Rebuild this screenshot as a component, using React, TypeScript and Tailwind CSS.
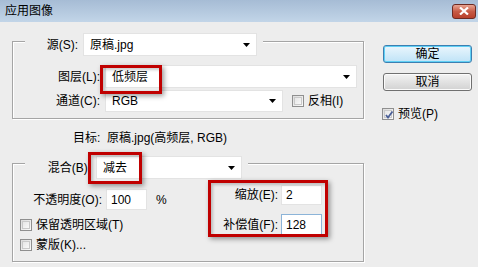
import React from "react";

const font = { fontFamily: '"Liberation Sans", "Noto Sans CJK SC", sans-serif' };

function Arrow() {
  return (
    <svg width="7" height="4" viewBox="0 0 7 4" className="shrink-0">
      <path d="M0 0H7L3.5 4Z" fill="#000" />
    </svg>
  );
}

function Select({ value, className }: { value: string; className: string }) {
  return (
    <div className={`flex items-center justify-between bg-white border border-[#e3e3e3] pl-[6px] pr-[6px] ${className}`}>
      <span>{value}</span>
      <Arrow />
    </div>
  );
}

function Check({ checked }: { checked?: boolean }) {
  return (
    <div className="w-[12px] h-[12px] shrink-0 border border-[#8f8f8f] bg-gradient-to-br from-[#dcdcdc] to-[#fbfbfb] p-[1px]">
      <div className="w-full h-full border border-[#c9c9c9] bg-gradient-to-br from-[#e6e6e6] to-[#f8f8f8] relative">
        {checked && (
          <svg width="10" height="10" viewBox="0 0 10 10" className="absolute -left-[1px] -top-[1px]">
            <path d="M2 5L4 7.5L8.5 1.5" stroke="#4a5f97" strokeWidth="1.8" fill="none" />
          </svg>
        )}
      </div>
    </div>
  );
}

function Box({ className }: { className: string }) {
  return (
    <div
      className={`absolute border-[3px] border-[#c00000] shadow-[2px_2px_5px_rgba(0,0,0,0.4),inset_2px_2px_3px_rgba(0,0,0,0.2)] pointer-events-none ${className}`}
    />
  );
}

export default function App() {
  const group = "border border-[#a5a5a5] shadow-[inset_1px_1px_0_#fff,1px_1px_0_#fff]";
  return (
    <div className="relative w-[478px] h-[267px] overflow-hidden bg-[#ededed] text-[12px] leading-none text-black" style={font}>
      {/* title bar */}
      <div className="h-[22px] flex items-center justify-between pl-[5px] pr-[2px] bg-gradient-to-b from-[#a6bcd5] to-[#c2d5e8]">
        <span className="text-[12px]">应用图像</span>
        <div className="w-[24px] h-[15px] rounded-[3px] border border-[#6d2a22] bg-gradient-to-b from-[#e8a593] via-[#c75a45] to-[#b8402c] flex items-center justify-center">
          <svg width="10" height="8" viewBox="0 0 10 8">
            <path d="M1 0.5L9 7.5M9 0.5L1 7.5" stroke="#fff" strokeWidth="2.2" />
          </svg>
        </div>
      </div>

      <div className="flex">
        {/* left side */}
        <div className="w-[383px] pl-[12px]">
          {/* group 1 */}
          <div className={`mt-[19px] w-[352px] h-[78px] ${group}`}>
            <div className="-mt-[9px] ml-[12px] w-fit flex items-center h-[23px] bg-[#ededed] pr-[6px]">
              <span className="w-[58px] text-right pr-[5px]">源(S):</span>
              <Select value="原稿.jpg" className="w-[174px] h-[23px]" />
            </div>
            <div className="mt-[9px] flex items-center h-[23px]">
              <span className="w-[92px] text-right pr-[5px]">图层(L):</span>
              <Select value="低频层" className="w-[252px] h-[23px]" />
            </div>
            <div className="mt-[2px] flex items-center h-[22px]">
              <span className="w-[92px] text-right pr-[5px]">通道(C):</span>
              <Select value="RGB" className="w-[178px] h-[22px]" />
              <div className="ml-[9px]"><Check /></div>
              <span className="ml-[4px]">反相(I)</span>
            </div>
          </div>

          <div className="mt-[11px] h-[16px] flex items-center pl-[61px]">目标:&nbsp;&nbsp;原稿.jpg(高频层, RGB)</div>

          {/* group 2 */}
          <div className={`mt-[17px] w-[352px] h-[99px] ${group}`}>
            <div className="-mt-[8px] ml-[12px] w-fit flex items-center h-[23px] bg-[#ededed] pr-[6px]">
              <span className="w-[71px] text-right pr-[5px]">混合(B):</span>
              <Select value="减去" className="w-[146px] h-[23px]" />
            </div>
            <div className="mt-[6px] flex">
              <div className="w-[195px] pt-[4px]">
                <div className="flex items-center h-[21px]">
                  <span className="w-[93px] text-right pr-[4px]">不透明度(O):</span>
                  <div className="w-[41px] h-[21px] bg-white border border-[#e3e3e3] flex items-center pl-[4px]">100</div>
                  <span className="ml-[9px]">%</span>
                </div>
                <div className="mt-[8px] h-[14px] flex items-center pl-[7px]">
                  <Check />
                  <span className="ml-[4px]">保留透明区域(T)</span>
                </div>
                <div className="mt-[6px] h-[14px] flex items-center pl-[7px]">
                  <Check />
                  <span className="ml-[4px]">蒙版(K)...</span>
                </div>
              </div>
              <div>
                <div className="flex items-center h-[20px]">
                  <span className="w-[73px] text-right pr-[3px]">缩放(E):</span>
                  <div className="w-[41px] h-[20px] bg-white border border-[#e3e3e3] flex items-center pl-[4px]">2</div>
                </div>
                <div className="mt-[9px] flex items-center h-[21px]">
                  <span className="w-[73px] text-right pr-[3px]">补偿值(F):</span>
                  <div className="w-[41px] h-[21px] bg-white border border-[#8cb4d8] flex items-center pl-[4px]">128</div>
                </div>
              </div>
            </div>
          </div>
        </div>

        {/* right side */}
        <div className="w-[89px]">
          <div className="mt-[23px] h-[18px] rounded-[3px] border border-[#3c7fb1] shadow-[inset_0_0_0_1px_#5fd0f5] bg-gradient-to-b from-[#eaf6fd] to-[#bfe3f7] flex items-center justify-center">确定</div>
          <div className="mt-[10px] h-[18px] rounded-[3px] border border-[#707070] shadow-[inset_0_0_0_1px_#fbfbfb] bg-gradient-to-b from-[#f3f3f3] to-[#d2d2d2] flex items-center justify-center">取消</div>
          <div className="mt-[17px] h-[12px] flex items-center -ml-[1px]">
            <Check checked />
            <span className="ml-[4px]">预览(P)</span>
          </div>
        </div>
      </div>

      <Box className="left-[100px] top-[65px] w-[62px] h-[29px]" />
      <Box className="left-[88px] top-[152px] w-[54px] h-[32px]" />
      <Box className="left-[208px] top-[180px] w-[120px] h-[57px]" />
    </div>
  );
}
